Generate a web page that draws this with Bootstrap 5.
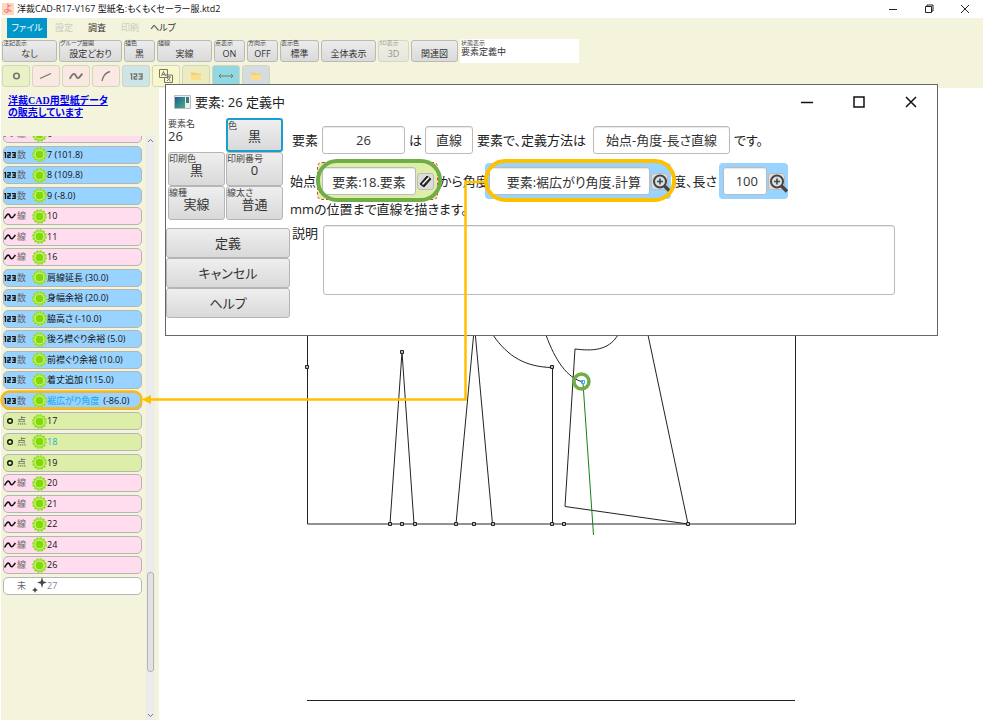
<!DOCTYPE html>
<html lang="ja">
<head>
<meta charset="utf-8">
<meta name="viewport" content="width=device-width, initial-scale=1">
<title>洋裁CAD-R17-V167 型紙名:もくもくセーラー服.ktd2</title>
<link href="https://cdn.jsdelivr.net/npm/bootstrap@5.3.0/dist/css/bootstrap.min.css" rel="stylesheet">
<style>
body{font-family:"Open Sans","Noto Sans CJK JP",sans-serif;font-size:12px;line-height:16px;color:#222;background:#fff}
body,button,input,textarea{font-feature-settings:"palt"}
.app-title{height:18px;font-size:9px;padding-left:2px;color:#111}
.app-ico{width:12px;height:12px;background:#fcd9bb;color:#ff5f80;font-size:10px;line-height:11px;text-align:center;margin-right:3px}
.win-btn{border:0;background:none;padding:0;line-height:0;color:#111}
.app-title .win-btn{width:36px;height:18px}
.beige{background:#f4f4dc}
.bars{height:70px;margin-left:1px}
.menu{padding-left:6px;gap:1px}
.menu-btn{border:0;background:none;height:20px;width:32px;font-size:9px;padding:0;color:#333;white-space:nowrap}
.menu-btn:disabled{color:#c9cbc0}
.menu-btn.on{width:40px;background:#0096c9;color:#fff}
.toolrow{height:24px;margin-top:1px;padding-left:1px;gap:2px}
.tool-btn{position:relative;flex:none;height:22px;border:1px solid #b9b9b5;border-radius:3px;background:linear-gradient(#ececec,#dadada);color:#333;font-size:9px;line-height:12px;padding:5px 0 0;text-align:center;white-space:nowrap}
.tool-btn:disabled{opacity:.5}
.cap{position:absolute;left:0;top:-1px;font-size:6px;line-height:7px;color:#444;white-space:nowrap}
.b31{width:31px}.b39{width:39px}.b47{width:47px}.b55{width:55px}.b63{width:63px}
.state-box{position:relative;width:119px;height:24px;background:#fff;font-size:9px;line-height:12px;color:#333;padding:7px 0 0 1px}
.state-box .cap{top:1px;left:1px}
.iconrow{gap:2px;padding:2px 0 0 1px}
.ico-btn{width:28px;height:22px;border:1px solid #d3d6bb;border-radius:3px;padding:0;line-height:0;color:#77776c;display:flex;align-items:center;justify-content:center}
.side{width:158px;height:632px;margin-left:1px}
.ad{height:48px;padding:7px 0 0 7px;font-family:"Liberation Serif","Noto Sans CJK JP",serif;font-weight:600;font-size:10px;line-height:12px}
.ad a{color:#0000ee}
.list-view{height:584px}
.items{height:470px;margin:-11px 0 0 2px;width:139px}
.elem{width:139px;height:18px;border:1px solid #b5b5b5;border-radius:5px;padding:0;font-size:9px;line-height:16px;display:flex;align-items:center;color:#111;text-align:left;white-space:nowrap}
.elem svg{flex:none}
.elem .kind{width:10px;margin:0 5px 0 1px;font-size:9px;color:#666}
.num{background:#99d3ff}.lin{background:#ffdcee}.pnt{background:#dceea8}.non{background:#fff;color:#888}
.hot{color:#12a5e5}.pnt .hot{color:#17b1c9}
.sbar{width:9px;background:#ececec}
.thumb{height:100px;width:7px;margin:426px 1px 0;border:1px solid #b5b5b5;border-radius:3px;background:#e2e2e2}
.dlg{position:absolute;left:165px;top:84px;width:773px;height:252px;background:#fff;border:1px solid #666;font-size:13px;color:#222}
.dlg-title{height:33px;font-size:13px;padding-left:8px}
.dlg-title .win-btn{width:52px;height:32px}
.props{width:124px}
.prop-grid{display:grid;grid-template-columns:57px 57px;gap:0 1px;padding-left:2px;height:102px}
.prop,.plain{position:relative;height:34px;font-size:13px;color:#333}
.prop{border:1px solid #b5b5b5;border-radius:3px;background:linear-gradient(#efefef,#d9d9d9);padding:2px 0 0;line-height:28px}
.prop .cap,.plain .cap{font-size:9px;line-height:12px;top:0}
.plain{padding-top:10px}
.prop.sel{border:2px solid #189fd0}
.act{width:100%;height:30px;border:1px solid #b5b5b5;border-radius:3px;background:linear-gradient(#efefef,#d9d9d9);font-size:13px;color:#333;padding:0}
.body-col{padding-top:8px}
.line1{height:28px;gap:4px;padding-left:2px}
.line2{height:36px;margin-top:9px;gap:2px}
.line3{margin-top:2px;height:16px}
.line4{margin-top:8px;gap:5px;padding-left:2px}
.field{height:28px;border:1px solid #bbb;border-radius:3px;background:#fff;color:#333;font-size:13px;text-align:center;padding:0;box-shadow:inset 0 1px 1px #e8e8e8}
.slot{height:36px;padding:0 3px 0 4px;border-radius:4px;gap:1px}
.slot-p{background:#dceea8;outline:1px dashed #f03a20}
.slot-n{background:#99d3ff}
.pick{width:17px;height:17px;border:1px solid #bbb;border-radius:3px;background:#dcdcdc;padding:0;line-height:0;overflow:visible}
.memo{width:572px;height:70px;resize:none}
.notes{position:absolute;left:0;top:0;width:100%;height:720px;pointer-events:none}
.f83{width:83px}.f48{width:48px}.f137{width:137px}.f94{width:94px}.f161{width:161px;text-align:right;padding-right:8px}.f44{width:44px;text-align:right;padding-right:8px}
.t112{width:112px}.t44{width:44px}.t26{width:26px}.t12{width:12px}
</style>
<script src="https://cdn.jsdelivr.net/npm/bootstrap@5.3.0/dist/js/bootstrap.bundle.min.js"></script>
</head>
<body class="position-relative overflow-hidden">
<svg class="d-none">
<symbol id="sun" viewBox="0 0 15 15"><circle cx="7.5" cy="7.5" r="6.6" fill="#e2efc0" stroke="#8fe01c" stroke-width="1.500" stroke-dasharray="2.150 1.300"/><circle cx="7.5" cy="7.5" r="5.700" fill="#e2efc0" stroke="#8fe01c" stroke-width="1.200"/><circle cx="7.5" cy="7.5" r="4" fill="#7fdb00"/></symbol>
<symbol id="wave" viewBox="0 0 12 10"><path d="M.6 7.5C2 4.6 3.6 2.4 5 3.4 6.2 4.300 6.200 7 7.700 6.800 9 6.600 10.200 4.600 11.400 3" fill="none" stroke="currentColor" stroke-width="1.600"/></symbol>
<symbol id="n123" viewBox="0 0 12 8"><path d="M.2 1.700H1.500V7M3.200 1.700H6.100V4.100H3.900V6.300H6.700M7.900 1.700H11.100V6.300H7.900M8.700 4H11" fill="none" stroke="currentColor" stroke-width="1.300"/></symbol>
<symbol id="ring" viewBox="0 0 12 10"><circle cx="6" cy="5" r="2.300" fill="none" stroke="currentColor" stroke-width="1.400"/></symbol>
<symbol id="folder" viewBox="0 0 12 10"><path d="M1 1.500H5L6 2.500H11V9H1Z" fill="#f3cf73"/><path d="M1 4H11V9H1Z" fill="#fbdd8b"/></symbol>
<symbol id="mag" viewBox="0 0 20 20"><circle cx="8" cy="7.500" r="6" fill="#d9e2e4" stroke="#444" stroke-width="2"/><path d="M5 7.500H11M8 4.500V10.500" stroke="#444" stroke-width="1.600"/><path d="M12.500 12L18 17.500" stroke="#444" stroke-width="3.400"/></symbol>
</svg>

<header class="app-title d-flex align-items-center">
<span class="app-ico">よ</span><span>洋裁CAD-R17-V167 型紙名:もくもくセーラー服.ktd2</span>
<span class="ms-auto d-flex">
<button class="win-btn" aria-label="最小化"><svg width="10" height="10"><path d="M1 5.500H9" stroke="#222"/></svg></button>
<button class="win-btn" aria-label="元に戻す"><svg width="10" height="10"><path d="M1.500 2.500H7.500V8.500H1.500ZM3 2.500V1H9V7H7.500" fill="none" stroke="#222"/></svg></button>
<button class="win-btn" aria-label="閉じる"><svg width="10" height="10"><path d="M1 1L9 9M9 1L1 9" stroke="#222"/></svg></button>
</span>
</header>

<div class="bars beige d-flex flex-column">
<nav class="menu d-flex">
<button class="menu-btn on">ファイル</button>
<button class="menu-btn" disabled>設定</button>
<button class="menu-btn">調査</button>
<button class="menu-btn" disabled>印刷</button>
<button class="menu-btn">ヘルプ</button>
</nav>
<div class="toolrow d-flex align-items-center">
<button class="tool-btn b55"><span class="cap">注記表示</span>なし</button>
<button class="tool-btn b63"><span class="cap">グループ展開</span>設定どおり</button>
<button class="tool-btn b31"><span class="cap">描色</span>黒</button>
<button class="tool-btn b55"><span class="cap">描線</span>実線</button>
<button class="tool-btn b31"><span class="cap">点表示</span>ON</button>
<button class="tool-btn b31"><span class="cap">方向示</span>OFF</button>
<button class="tool-btn b39"><span class="cap">表示色</span>標準</button>
<button class="tool-btn b55">全体表示</button>
<button class="tool-btn b31" disabled><span class="cap">3D表示</span>3D</button>
<button class="tool-btn b47">関連図</button>
<div class="state-box"><span class="cap">状態表示</span>要素定義中</div>
</div>
<div class="d-flex iconrow">
<button class="ico-btn" style="background:#e9f1c6" aria-label="点"><svg width="15" height="12"><use href="#ring"/></svg></button>
<button class="ico-btn" style="background:#fae9e2" aria-label="直線"><svg width="14" height="10"><path d="M1 7.500L12 2.500" stroke="currentColor" stroke-width="1.300"/></svg></button>
<button class="ico-btn" style="background:#fae9e2" aria-label="曲線"><svg width="14" height="12"><use href="#wave"/></svg></button>
<button class="ico-btn" style="background:#fae9e2" aria-label="円弧"><svg width="12" height="12"><path d="M2 11C3 6 6 2.500 10 1.500" fill="none" stroke="currentColor" stroke-width="1.300"/></svg></button>
<button class="ico-btn" style="background:#cde5e8" aria-label="数値"><svg width="13" height="9"><use href="#n123"/></svg></button>
<button class="ico-btn" style="background:#f8f8cc" aria-label="文字"><svg width="14" height="14"><path d="M.5.500H8.500V8.500H.5ZM6 6H13.500V13.500H5.500V9M2.500 7L4.500 2.500 6.500 7M3.200 5.500H6M7.500 8H12M9.700 7V8M8 12L11.500 8.500M8 9L11.500 12" fill="none" stroke="currentColor"/></svg></button>
<button class="ico-btn" style="background:#ebecc0" aria-label="フォルダ"><svg width="12" height="10"><use href="#folder"/></svg></button>
<button class="ico-btn" style="background:#92d8e3" aria-label="寸法"><svg width="16" height="8"><path d="M1 4H15M3 2L1 4 3 6M13 2L15 4 13 6" fill="none" stroke="currentColor"/></svg></button>
<button class="ico-btn" style="background:#d5dce0" aria-label="グループ"><svg width="12" height="10"><use href="#folder"/></svg></button>
</div>
</div>

<div class="d-flex">
<aside class="side beige flex-shrink-0">
<div class="ad"><a href="#">洋裁CAD用型紙データ<br>の販売しています</a></div>
<div class="list-view d-flex justify-content-between overflow-hidden">
<div class="items d-flex flex-column justify-content-between">
<button class="elem lin"><svg width="12" height="10"><use href="#wave"/></svg><span class="kind">線</span><svg width="15" height="15"><use href="#sun"/></svg>6</button>
<button class="elem num"><svg width="12" height="8"><use href="#n123"/></svg><span class="kind">数</span><svg width="15" height="15"><use href="#sun"/></svg>7 (101.8)</button>
<button class="elem num"><svg width="12" height="8"><use href="#n123"/></svg><span class="kind">数</span><svg width="15" height="15"><use href="#sun"/></svg>8 (109.8)</button>
<button class="elem num"><svg width="12" height="8"><use href="#n123"/></svg><span class="kind">数</span><svg width="15" height="15"><use href="#sun"/></svg>9 (-8.0)</button>
<button class="elem lin"><svg width="12" height="10"><use href="#wave"/></svg><span class="kind">線</span><svg width="15" height="15"><use href="#sun"/></svg>10</button>
<button class="elem lin"><svg width="12" height="10"><use href="#wave"/></svg><span class="kind">線</span><svg width="15" height="15"><use href="#sun"/></svg>11</button>
<button class="elem lin"><svg width="12" height="10"><use href="#wave"/></svg><span class="kind">線</span><svg width="15" height="15"><use href="#sun"/></svg>16</button>
<button class="elem num"><svg width="12" height="8"><use href="#n123"/></svg><span class="kind">数</span><svg width="15" height="15"><use href="#sun"/></svg>肩線延長 (30.0)</button>
<button class="elem num"><svg width="12" height="8"><use href="#n123"/></svg><span class="kind">数</span><svg width="15" height="15"><use href="#sun"/></svg>身幅余裕 (20.0)</button>
<button class="elem num"><svg width="12" height="8"><use href="#n123"/></svg><span class="kind">数</span><svg width="15" height="15"><use href="#sun"/></svg>脇高さ (-10.0)</button>
<button class="elem num"><svg width="12" height="8"><use href="#n123"/></svg><span class="kind">数</span><svg width="15" height="15"><use href="#sun"/></svg>後ろ襟ぐり余裕 (5.0)</button>
<button class="elem num"><svg width="12" height="8"><use href="#n123"/></svg><span class="kind">数</span><svg width="15" height="15"><use href="#sun"/></svg>前襟ぐり余裕 (10.0)</button>
<button class="elem num"><svg width="12" height="8"><use href="#n123"/></svg><span class="kind">数</span><svg width="15" height="15"><use href="#sun"/></svg>着丈追加 (115.0)</button>
<button class="elem num"><svg width="12" height="8"><use href="#n123"/></svg><span class="kind">数</span><svg width="15" height="15"><use href="#sun"/></svg><span class="hot me-1">裾広がり角度</span>(-86.0)</button>
<button class="elem pnt"><svg width="12" height="10"><use href="#ring"/></svg><span class="kind">点</span><svg width="15" height="15"><use href="#sun"/></svg>17</button>
<button class="elem pnt"><svg width="12" height="10"><use href="#ring"/></svg><span class="kind">点</span><svg width="15" height="15"><use href="#sun"/></svg><span class="hot">18</span></button>
<button class="elem pnt"><svg width="12" height="10"><use href="#ring"/></svg><span class="kind">点</span><svg width="15" height="15"><use href="#sun"/></svg>19</button>
<button class="elem lin"><svg width="12" height="10"><use href="#wave"/></svg><span class="kind">線</span><svg width="15" height="15"><use href="#sun"/></svg>20</button>
<button class="elem lin"><svg width="12" height="10"><use href="#wave"/></svg><span class="kind">線</span><svg width="15" height="15"><use href="#sun"/></svg>21</button>
<button class="elem lin"><svg width="12" height="10"><use href="#wave"/></svg><span class="kind">線</span><svg width="15" height="15"><use href="#sun"/></svg>22</button>
<button class="elem lin"><svg width="12" height="10"><use href="#wave"/></svg><span class="kind">線</span><svg width="15" height="15"><use href="#sun"/></svg>24</button>
<button class="elem lin"><svg width="12" height="10"><use href="#wave"/></svg><span class="kind">線</span><svg width="15" height="15"><use href="#sun"/></svg>26</button>
<button class="elem non"><svg width="12" height="10"></svg><span class="kind">未</span><svg width="15" height="17"><path d="M10 0L11.200 4.300 15 5.500 11.200 6.700 10 11 8.800 6.700 5 5.500 8.800 4.300ZM3 10L3.900 12.100 6 13 3.900 13.900 3 16 2.100 13.900 0 13 2.100 12.100Z" fill="#444"/></svg>27</button>
</div>
<div class="sbar d-flex flex-column justify-content-between me-1">
<svg width="9" height="10"><path d="M2 6L4.500 3.500 7 6" fill="none" stroke="#777"/></svg>
<div class="thumb mb-auto"></div>
<svg width="9" height="10"><path d="M2 4L4.500 6.500 7 4" fill="none" stroke="#777"/></svg>
</div>
</div>
</aside>

<main class="flex-grow-1 overflow-hidden">
<svg class="d-block" width="824" height="632" viewBox="159 88 824 632" fill="none" stroke="#222">
<path d="M307.500 300V524H795.500V300M307 700.500H795"/>
<path d="M390 524L402 352 414 524M456 524L475 320M474 320L492.500 524M493 335C508 357 526 367 552 367.500M552.500 367V524M546 335C555 360 567 378 583 382M575 349L565 506.500 688 524 648 335M575 349C592 351 608 351 618 335"/>
<path d="M583 383L593.500 535" stroke="#178017"/>
<g fill="#bbb"><path d="M305.500 365.500h3v3h-3zM400.500 350.500h3v3h-3zM550.500 365.500h3v3h-3zM388.500 522.500h3v3h-3zM400.500 522.500h3v3h-3zM413.500 522.500h3v3h-3zM454.500 522.500h3v3h-3zM472.500 522.500h3v3h-3zM491.500 522.500h3v3h-3zM550.500 522.500h3v3h-3zM562.500 522.500h3v3h-3zM686.500 522.500h3v3h-3z"/></g>
<path d="M581.500 380.500h3v3h-3z" stroke="#22b4ee"/>
</svg>
</main>
</div>

<section class="dlg" role="dialog" aria-label="要素: 26 定義中">
<div class="dlg-title d-flex align-items-center">
<svg class="me-1" width="17" height="14"><defs><linearGradient id="g" x2="1" y2="1"><stop stop-color="#245b9c"/><stop offset="1" stop-color="#45b179"/></linearGradient></defs><path d="M.5.500H16.500V13.500H.5Z" fill="#eee" stroke="#bbb"/><path d="M1 2H11V13H1Z" fill="url(#g)"/><path d="M12 2H15V8H12Z" fill="#357a86"/></svg>
<span>要素: 26 定義中</span>
<span class="ms-auto d-flex">
<button class="win-btn" aria-label="最小化"><svg width="14" height="14"><path d="M1 7.500H13" stroke="#111" stroke-width="1.500"/></svg></button>
<button class="win-btn" aria-label="最大化"><svg width="12" height="12"><path d="M1 1H11V11H1Z" fill="none" stroke="#111" stroke-width="1.500"/></svg></button>
<button class="win-btn" aria-label="閉じる"><svg width="12" height="12"><path d="M1 1L11 11M11 1L1 11" stroke="#111" stroke-width="1.500"/></svg></button>
</span>
</div>
<div class="d-flex">
<div class="props">
<div class="prop-grid">
<div class="plain"><span class="cap">要素名</span>26</div>
<button class="prop sel"><span class="cap">色</span>黒</button>
<button class="prop"><span class="cap">印刷色</span>黒</button>
<button class="prop"><span class="cap">印刷番号</span>0</button>
<button class="prop"><span class="cap">線種</span>実線</button>
<button class="prop"><span class="cap">線太さ</span>普通</button>
</div>
<div class="d-flex flex-column pt-2">
<button class="act">定義</button>
<button class="act">キャンセル</button>
<button class="act">ヘルプ</button>
</div>
</div>
<div class="body-col">
<div class="d-flex align-items-center line1">
<span class="t26">要素</span><button class="field f83">26</button><span class="t12">は</span><button class="field f48">直線</button><span class="t112 text-nowrap">要素で、定義方法は</span><button class="field f137">始点-角度-長さ直線</button><span>です。</span>
</div>
<div class="d-flex align-items-center line2">
<label for="p1" class="t26">始点</label>
<span class="slot slot-p d-flex align-items-center"><input id="p1" class="field f94" value="要素:18.要素"><button class="pick" aria-label="編集"><svg width="15" height="15"><path d="M2 10L9 2 13 5 6 13Z" fill="#222" stroke="#222"/><path d="M4.500 10.500L11 3.500" stroke="#fff" stroke-width="1.500"/></svg></button></span>
<label for="p2" class="t44 text-nowrap">から角度</label>
<span class="slot slot-n d-flex align-items-center"><input id="p2" class="field f161" value="要素:裾広がり角度.計算"><button class="pick" aria-label="検索"><svg width="20" height="20"><use href="#mag"/></svg></button></span>
<label for="p3" class="t44 text-nowrap">度、長さ</label>
<span class="slot slot-n d-flex align-items-center"><input id="p3" class="field f44" value="100"><button class="pick" aria-label="検索"><svg width="20" height="20"><use href="#mag"/></svg></button></span>
</div>
<div class="line3">mmの位置まで直線を描きます。</div>
<div class="d-flex line4"><label for="memo">説明</label><textarea id="memo" class="field memo"></textarea></div>
</div>
</div>
</section>

<svg class="notes" fill="none">
<path d="M484 182H465.500V399.500H150" stroke="#ffc000" stroke-width="2.500"/>
<path d="M142 399.500L151 395V404Z" fill="#ffc000"/>
<rect x="486" y="161" width="188" height="39" rx="19" stroke="#ffc000" stroke-width="4"/>
<rect x="1.500" y="391.500" width="140" height="17" rx="8" stroke="#fdb813" stroke-width="2.500"/>
<rect x="318" y="161" width="122" height="39" rx="19" stroke="#70ad47" stroke-width="4"/>
<circle cx="581.500" cy="381.500" r="7.500" stroke="#70ad47" stroke-width="3.500"/>
</svg>
</body>
</html>
